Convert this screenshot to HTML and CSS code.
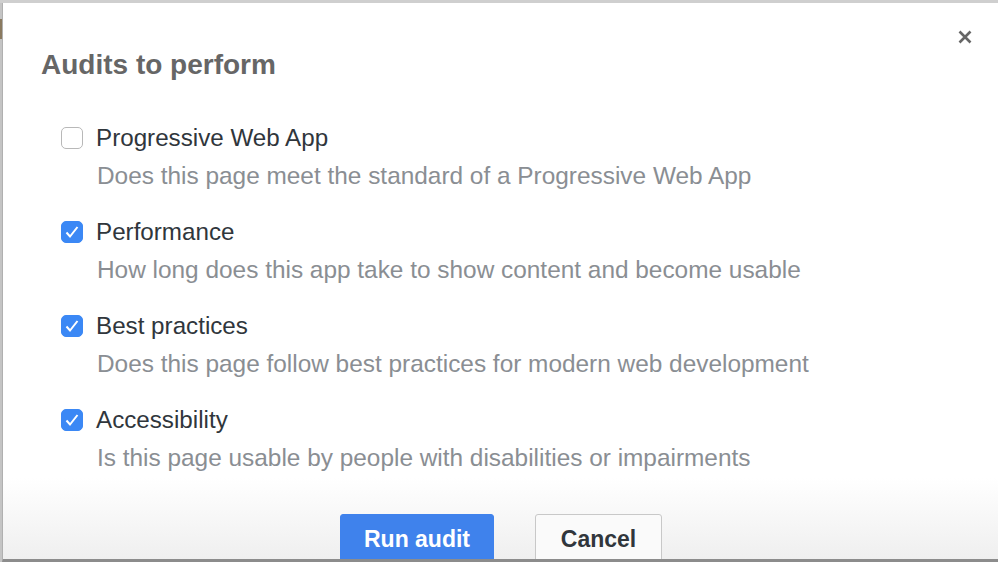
FILE: index.html
```html
<!DOCTYPE html>
<html>
<head>
<meta charset="utf-8">
<link rel="stylesheet" href="styles.css">
</head>
<body>
<div class="backdrop-strip"><span class="peek"></span></div>
<div class="dialog">
  <button class="close" aria-label="Close">
    <svg width="14" height="14" viewBox="0 0 14 14"><path d="M1.5 1.5 L12.5 12.5 M12.5 1.5 L1.5 12.5" stroke="#666" stroke-width="2.6" stroke-linecap="butt"/></svg>
  </button>
  <h1 class="title">Audits to perform</h1>
  <ul class="audits">
    <li class="audit">
      <label class="audit-label"><span class="box"></span>Progressive Web App</label>
      <div class="audit-desc">Does this page meet the standard of a Progressive Web App</div>
    </li>
    <li class="audit">
      <label class="audit-label"><span class="box checked"><svg width="16" height="14" viewBox="0 0 16 14"><path d="M2.5 7.5 L6 11.5 L13.5 2" fill="none" stroke="#fff" stroke-width="2"/></svg></span>Performance</label>
      <div class="audit-desc">How long does this app take to show content and become usable</div>
    </li>
    <li class="audit">
      <label class="audit-label"><span class="box checked"><svg width="16" height="14" viewBox="0 0 16 14"><path d="M2.5 7.5 L6 11.5 L13.5 2" fill="none" stroke="#fff" stroke-width="2"/></svg></span>Best practices</label>
      <div class="audit-desc">Does this page follow best practices for modern web development</div>
    </li>
    <li class="audit">
      <label class="audit-label"><span class="box checked"><svg width="16" height="14" viewBox="0 0 16 14"><path d="M2.5 7.5 L6 11.5 L13.5 2" fill="none" stroke="#fff" stroke-width="2"/></svg></span>Accessibility</label>
      <div class="audit-desc">Is this page usable by people with disabilities or impairments</div>
    </li>
  </ul>
  <div class="footer">
    <button class="btn primary">Run audit</button>
    <button class="btn">Cancel</button>
  </div>
</div>
</body>
</html>
```
FILE: styles.css
```css
html, body {
  margin: 0;
  padding: 0;
  width: 998px;
  height: 562px;
  overflow: hidden;
}
body {
  display: flex;
  font-family: "Liberation Sans", Arial, sans-serif;
  padding-top: 3px;
  box-sizing: border-box;
  background: #cfcfcf;
}
.backdrop-strip {
  width: 2px;
  flex: none;
  background: #c4c4c4;
}
.peek {
  display: block;
  margin-top: 16px;
  height: 20px;
  background: #8a7a60;
}
.dialog {
  position: relative;
  flex: 1;
  height: 559px;
  background: linear-gradient(to bottom, #fff 0, #fff 475px, #efefef 556px);
  border-left: 1px solid #b0b0b0;
  border-bottom: 3px solid #8c8c8c;
  padding: 47px 0 0 38px;
  box-sizing: border-box;
  overflow: hidden;
}
.close {
  position: absolute;
  right: 26px;
  top: 27px;
  border: 0;
  background: none;
  padding: 0;
  width: 14px;
  height: 14px;
  display: flex;
}
.title {
  margin: 0;
  font-size: 28px;
  line-height: 30px;
  font-weight: bold;
  color: #666;
}
.audits {
  list-style: none;
  margin: 39px 0 0 0;
  padding: 0 0 0 20px;
  display: flex;
  flex-direction: column;
  gap: 18px;
}
.audit-label {
  display: flex;
  align-items: center;
  height: 38px;
  font-size: 24.2px;
  color: #30363c;
}
.box {
  width: 20px;
  height: 20px;
  border: 1px solid #b8b8b8;
  border-radius: 5px;
  margin-right: 13px;
  display: flex;
  align-items: center;
  justify-content: center;
  background: #fff;
  flex: none;
}
.box.checked {
  background: #3b88f5;
  border-color: #3b88f5;
}
.audit-desc {
  height: 38px;
  line-height: 38px;
  padding-left: 36px;
  font-size: 24.4px;
  color: #8a8e93;
}
.footer {
  display: flex;
  margin-top: 37px;
  padding-left: 299px;
  gap: 41px;
}
.btn {
  font-family: "Liberation Sans", Arial, sans-serif;
  height: 50px;
  flex: none;
  font-size: 23px;
  font-weight: bold;
  border-radius: 3px;
  border: 1px solid #c8c8c8;
  background: #fafafa;
  color: #30363c;
  width: 127px;
  padding: 0;
}
.btn.primary {
  width: 154px;
  background: #3f82ec;
  border-color: #3f82ec;
  color: #fff;
}
```
